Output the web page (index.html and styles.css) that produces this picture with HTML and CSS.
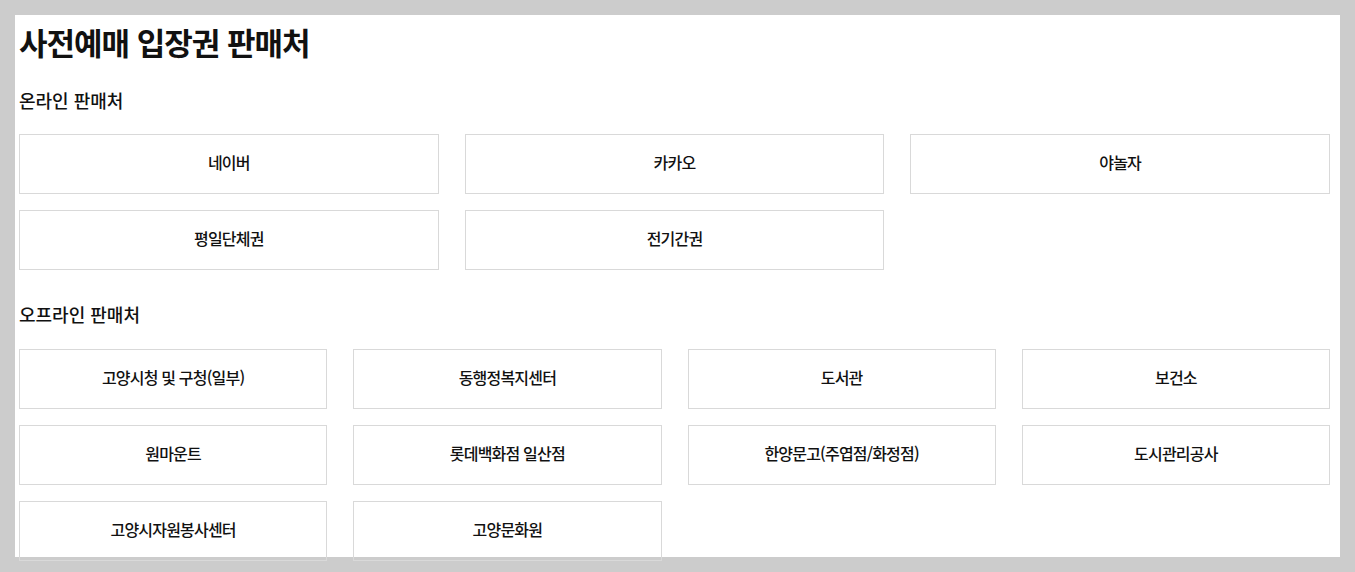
FILE: index.html
```html
<!DOCTYPE html>
<html lang="ko">
<head>
<meta charset="utf-8">
<link rel="stylesheet" href="styles.css">
</head>
<body>
<div class="panel">
  <h1 class="title">사전예매 입장권 판매처</h1>
  <h3 class="section-title">온라인 판매처</h3>
  <div class="grid grid-3">
    <div class="shop">네이버</div>
    <div class="shop">카카오</div>
    <div class="shop">야놀자</div>
    <div class="shop">평일단체권</div>
    <div class="shop">전기간권</div>
  </div>
  <h3 class="section-title section-offline">오프라인 판매처</h3>
  <div class="grid grid-4">
    <div class="shop">고양시청 및 구청(일부)</div>
    <div class="shop">동행정복지센터</div>
    <div class="shop">도서관</div>
    <div class="shop">보건소</div>
    <div class="shop">원마운트</div>
    <div class="shop">롯데백화점 일산점</div>
    <div class="shop">한양문고(주엽점/화정점)</div>
    <div class="shop">도시관리공사</div>
    <div class="shop">고양시자원봉사센터</div>
    <div class="shop">고양문화원</div>
  </div>
</div>
</body>
</html>
```
FILE: styles.css
```css
html, body {
  margin: 0;
  padding: 0;
}
body {
  background: #cccccc;
  padding: 15px;
  font-family: "Noto Sans CJK KR", "Noto Sans", sans-serif;
  color: #111;
}
.panel {
  background: #fff;
  height: 542px;
  box-sizing: border-box;
  padding: 9px 10px 0 4px;
}
.title {
  margin: 0;
  font-size: 31px;
  font-weight: 700;
  line-height: 36px;
  letter-spacing: -1px;
}
.section-title {
  margin: 28px 0 22px;
  font-size: 18px;
  font-weight: 500;
  line-height: 24px;
  letter-spacing: 0;
}
.section-offline {
  margin-top: 32px;
  margin-bottom: 23px;
}
.grid {
  display: grid;
  column-gap: 26px;
  row-gap: 16px;
}
.grid-3 { grid-template-columns: repeat(3, 1fr); }
.grid-4 { grid-template-columns: repeat(4, 1fr); }
.shop {
  height: 60px;
  box-sizing: border-box;
  border: 1px solid #d9d9d9;
  padding-bottom: 5px;
  display: flex;
  align-items: center;
  justify-content: center;
  font-size: 16px;
  font-weight: 500;
  letter-spacing: -0.8px;
}
```
